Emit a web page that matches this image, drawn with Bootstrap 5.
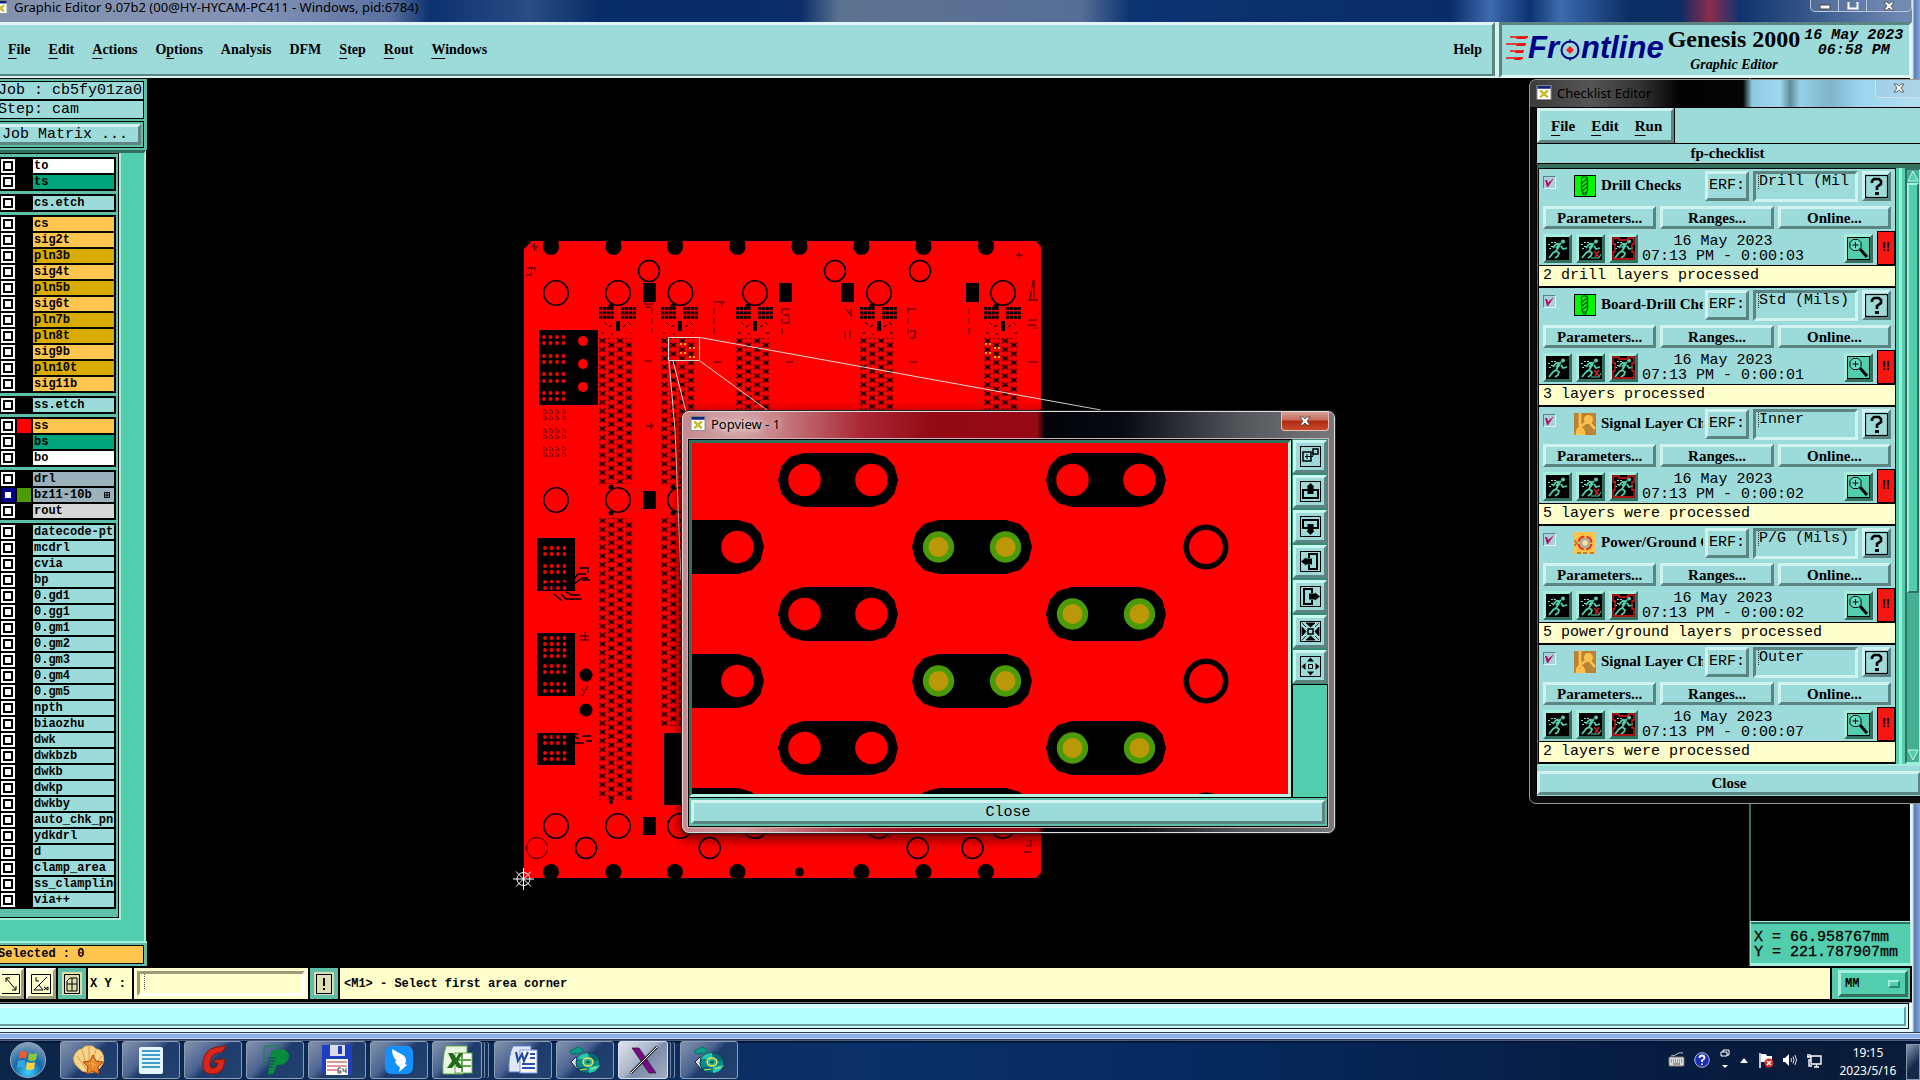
<!DOCTYPE html>
<html lang="en">
<head>
<meta charset="utf-8">
<meta name="viewport" content="width=device-width, initial-scale=1">
<title>Graphic Editor</title>
<link href="https://cdn.jsdelivr.net/npm/bootstrap@5.3.0/dist/css/bootstrap.min.css" rel="stylesheet">
<style>
:root{--cy:#9cdbda;--cyl:#d0f3f1;--cyd:#5a8583;--tl:#52ceae;--tll:#a4efdb;--tld:#34705f;--cream:#ffffcb}
body{font-family:"Liberation Serif",serif;font-size:14px;line-height:16px;color:#000;background:#000;overflow:hidden}
button,input,select{font:inherit;color:inherit;border-radius:0}
a{color:inherit;text-decoration:none}
a u{text-underline-offset:4px}
.mono{font-family:"Liberation Mono",monospace;font-size:15px}
.mono-s{font-family:"Liberation Mono",monospace;font-size:12px;font-weight:700}
.ui{font-family:"Noto Sans",sans-serif;font-size:13px}
.raised{background:var(--cy);border:3px solid;border-color:var(--cyl) var(--cyd) var(--cyd) var(--cyl);padding:0}
.raised-t{background:var(--tl);border:3px solid;border-color:var(--tll) var(--tld) var(--tld) var(--tll);padding:0}
.titlebar{height:22px;background:linear-gradient(90deg,#8391ae 0,#8494b6 250px,#5a719f 390px,#0d3270 430px,#2b4c85 530px,#082c66 600px,#0a2d68 800px,#5d7390 840px,#566f96 1080px,#0c3472 1130px,#0a2c66 1450px,#3d6bb0 1490px,#0c336f 1530px,#3c6bae 1560px,#0c2d63 1630px,#0c2d63 1680px,#8a2c4c 1710px,#0f336e 1740px,#6d87b0 1900px)}
.titlebar .ttl{color:#000;line-height:14px;padding-left:6px}
.winframe{padding-right:8px;background:linear-gradient(90deg,#fff 0,#5c7fb4 30%,#7fa6de) right/8px 100% no-repeat,#000}
.winbtns{height:12px;width:102px;border:1px solid #b8c8de;border-top:0;border-radius:0 0 5px 5px;background:#8093b355}
.winbtns button{background:none;border:0;border-left:1px solid #b8c8de;padding:0;line-height:0;width:28px}
.winbtns .wide{width:46px}
.apphead{height:56px;background:#d8f4f1}
.menubar{background:var(--cy);border:solid;border-width:3px 3px 2px 0;border-color:#e0f6f6 var(--cyd) var(--cyd);font-weight:700;gap:18px;padding:0 10px 0 8px;margin-bottom:2px}
.brand{width:413px;background:var(--cy);border:3px solid;border-color:var(--cyd) #dff8f5 #dff8f5 var(--cyd)}
.logo-t{font:italic 700 31px/34px "Liberation Sans",sans-serif;color:#000087}
.product{font-size:24px;line-height:28px;font-weight:700}
.stamp{line-height:15px;padding-top:3px}
.side{width:147px;background:#000}
.sidehead{background:#62bda8;padding:2px 3px 2px 0;border-top:1px solid #000}
.sidehead .cell{text-indent:-2px}
.cell{border:1px solid #000;border-left:0;background:var(--cy);height:19px;line-height:17px;overflow:hidden;white-space:pre}
.matrix{border:1px solid #000;border-left:0;height:27px;padding:2px 2px 2px 0;margin-top:2px;background:#62bda8}
.matrix button{height:21px;line-height:14px;border-left:0;width:100%;text-align:left;padding-left:2px}
.track{background:var(--tl);border-right:2px solid var(--tll);border-top:3px solid var(--tld);width:146px}
.frame{width:121px;border:solid;border-width:0 2px 2px 0;border-color:var(--tll);background:#000;padding:0 1px 1px 0}
.frame>div{background:#5fc0aa;padding:3px 2px 8px 0;border-top:1px solid #000}
.grp{background:#000;width:116px;padding:2px 0;margin-bottom:3px;display:flex;flex-direction:column;gap:2px}
.lay{display:flex;height:14px;padding-left:1px;gap:2px;line-height:14px}
.lay input{appearance:none;width:14px;height:14px;margin:0;background:#fff;box-shadow:inset 0 0 0 2px #fff,inset 0 0 0 4px #000;flex:none}
.lay input.act{box-shadow:inset 0 0 0 4px #00008c}
.sw{width:14px;flex:none}.sw-r{background:red}.sw-g{background:#4b9b05}
.lay label{width:81px;overflow:hidden;white-space:nowrap;padding-left:1px;background:var(--cy)}
.lay .c-w{background:#fff}.lay .c-g{background:#00a57c}.lay .c-o{background:#ffc54f}.lay .c-y{background:#d9ab00}.lay .c-b{background:#9bb2bc}.lay .c-s{background:#d6d6d6}
.selbox{background:#62bda8;border-top:2px solid var(--tll);padding:2px 3px 2px 0}
.selbox div{background:#ffc54f;text-indent:-2px}
.rightp{width:163px;border-left:2px solid var(--tld);border-right:2px solid #dff8f5}
.coords{background:var(--tl);border-top:2px solid var(--tld);border-bottom:3px solid var(--tll);height:44px;padding:6px 0 0 3px;line-height:15px;white-space:pre;outline:1px solid var(--tll);-webkit-text-stroke:.3px #000}
.cmd{height:36px;background:#000;padding:2px 2px 3px 0;gap:2px}
.cmd>*{background:var(--cream)}
.cmd .lead-in{width:44px;padding-left:2px;white-space:pre}
.tool{width:30px;padding:0;border:3px solid;border-color:#fffff0 #9c9c7c #9c9c7c #fffff0;line-height:0}
.tool.first{width:24px;border-left:0}
.tool.on{border:4px solid #5fbfa6;width:28px;background:#deddb2}
.cmd input{border:3px solid;border-color:#9c9c7c #fff #fff #9c9c7c;background:repeating-linear-gradient(#555 0 1px,transparent 1px 2px) 4px 0/1px 16px no-repeat,var(--cream);width:100%;height:100%;outline:1px solid var(--cream);padding:0 3px 8px}
.cmd .entry{width:174px;padding:3px}
.cmd .unit{width:78px;background:var(--tl);padding:2px}
.unit select{appearance:none;width:70px;height:27px;padding-left:4px;margin-left:4px;outline:0}
.unit svg{right:10px;top:12px}
.cybar{height:30px;background:#e3ffff;border-top:1px solid #6b8585;padding:0 3px 2px 0}
.cybar>div{height:26px;border:1px solid #000;border-left:0;padding:2px 2px 2px 0;background:#c6ffff}
.cybar>div>div{height:100%;background:#b4ffff;border:2px solid;border-color:#e2ffff #6c9b9b #6c9b9b;border-left:0}
.botedge{height:8px;background:linear-gradient(#2b3f5c 0 1px,#dbe8fa 1px 2px,#8fb0ea 2px 6px,#c8daf5 6px 7px,#2a3c58 7px);margin-right:-8px}
.taskbar{height:40px;background:linear-gradient(#4a5f80 0 1px,#031738 1px 3px,transparent 3px),linear-gradient(90deg,#0c2648,#0c2a55 20%,#0b2f68 45%,#062a60 62%,#061c40 86%,#0a1c38);color:#fff}
.orb{width:60px;background:none;border:0;padding:0 5px 0 0;line-height:0;text-align:center}
.tb{width:58px;height:38px;border:1px solid #8b9cb5;border-radius:3px;background:linear-gradient(135deg,#8594ae 0,#4a6390 40%,#1d3c6c 52%,#24426f);padding:0;line-height:0}
.tb.st{width:50px;margin-right:8px;box-shadow:3px 0 0 -1px #14305a,4px 0 0 -1px #7589a8,7px 0 0 -1px #14305a,8px 0 0 -1px #7589a8}
.tb.cur{background:linear-gradient(135deg,#dfe4ec 0,#a9b5c9 45%,#7c8cab 55%,#a2adc2);border-color:#dce3ee}
.tray{gap:8px}
.clock{font-size:12px;line-height:18px;width:76px;padding-top:4px}
.peek{width:14px;border:1px solid #8897b0;background:linear-gradient(135deg,#8a9bb5,#16294a 60%);padding:0}
.popw{left:535px;top:333px;width:653px;height:422px;border-radius:7px;border:1px solid #ddd;box-shadow:0 0 0 1px #222,0 4px 12px 2px #0009;padding:0 5px 4px 4px;background:linear-gradient(90deg,#c58a90 0,#d3a3a6 60px,#a92733 180px,#930914 250px,#960a14 354px,#02040a 362px,#080a10 440px,#55575c 560px,#77797c)}
.popw::before{content:"";position:absolute;inset:124px 0 0 0;z-index:-1;border-radius:0 0 7px 7px;background:linear-gradient(90deg,#8c0f1a 358px,#050609 360px)}
.popw .cap{height:26px;padding:4px 0 0 3px;gap:5px}
.glow{text-shadow:0 0 6px #fffa,0 0 8px #fff8,0 0 10px #fff8}
.xred{width:48px;height:19px;border:1px solid #e8c0b8;border-top:0;border-radius:0 0 4px 4px;background:linear-gradient(#d9a096,#c66a59 45%,#b02a12 50%,#c8492a);padding:0;line-height:0;margin-top:-4px}
.popin{background:#000;border:1px solid #c9b5b5;padding:1px;min-height:0}
.popcv{border:3px solid;border-color:var(--tld) #b4f2e2 #b4f2e2 var(--tld);min-width:0;background:red}
.popcol{width:36px;background:var(--tl);border-left:2px solid #000}
.popcol button{height:33px;margin-bottom:2px;outline:1px solid #3b8a76;border-color:#c6f7f0 var(--cyd) var(--cyd) #c6f7f0;display:block;width:100%;line-height:0;box-shadow:0 2px 0 #000}
.popclose{background:#5fc0aa;padding:2px;border-top:1px solid #000}
.popclose button{height:24px;line-height:17px}
.chk{left:1529px;top:79px;width:399px;height:725px;border:1px solid #999;border-radius:7px;padding:0 0 6px 6px;background:linear-gradient(90deg,#3a3a3a 0,#555 60px,#333 110px,#020202 150px,#050505 213px,#8fc9e0 222px,#9fd8ee 250px,#5f8b9c 260px,#96d0e8 270px,#7fb4ca 300px,#9cd5ee 330px,#b8e0f0) 0 0/100% 27px no-repeat,#0b0b0b}
.chk .cap{height:27px;gap:5px;padding:5px 0 0 0}
.xgl{width:48px;height:19px;border:1px solid #cfe0ee;border-top:0;border-radius:0 0 4px 4px;background:#9fc6dd66;padding:0;line-height:0;margin-top:-6px}
.chkin{width:385px;background:var(--cy);border:1px solid #000;border-right:0}
.cmenu{width:137px;height:35px;font-size:15px;font-weight:700;gap:16px;padding-left:11px;outline:1px solid #000}
.ctitle{height:21px;font-size:15px;font-weight:700;line-height:19px;border:solid #000;border-width:1px 0;padding-right:3px}
.cscroll{height:602px;background:var(--tl);border-top:4px solid var(--tld);border-left:1px solid var(--tld);border-bottom:2px solid var(--tll);overflow:hidden}
.citems{width:359px;overflow:hidden;background:#000;padding:1px 1px 0}
.item{background:var(--cy);height:117px;margin-bottom:2px;padding:2px 0 0 4px;font-size:15px}
.item .row1{height:36px}
.item .name{font-weight:700;height:28px;line-height:28px;min-width:0}
.item .name svg{margin:4px 5px 0 18px}
.item .name label{overflow:hidden;white-space:nowrap;min-width:0}
.tick{appearance:none;width:13px;height:13px;border:1px solid #5a8583;border-color:#5a8583 #e0f6f6 #e0f6f6 #5a8583;margin:5px 0 0;background:#a9d0dc url("data:image/svg+xml,%3Csvg xmlns='http://www.w3.org/2000/svg' viewBox='0 0 11 11'%3E%3Cpath d='M1 3h2l1 3L10 1 4 10H3z' fill='%23b0135c'/%3E%3C/svg%3E");flex:none}
.erf{width:44px;height:30px;margin:0 4px 0 2px}
.qbtn{width:29px;height:30px;line-height:0}
.ent{border:3px solid;border-color:var(--cyd) var(--cyl) var(--cyl) var(--cyd);background:repeating-linear-gradient(#333 0 1px,transparent 1px 2px) 2px 0/1px 15px no-repeat,var(--cy);width:105px;height:31px;padding:0 0 10px 3px;border-radius:0;outline:0}
.b3{height:23px;font-weight:700;line-height:14px;flex:1}
.runrow{margin-top:5px}
.run{width:29px;height:29px;line-height:0}
.bang{width:18px;background:#f81613;border:1px solid #000;font:700 12px/30px "Liberation Sans",sans-serif;text-align:center;margin-top:-3px;height:34px}
.msg{background:var(--cream);border-top:1px solid #000;line-height:20px;height:21px;margin-left:-4px;padding-left:4px}
.when{line-height:15px}
.sb{width:16px;margin-left:3px;background:#47ad94;border:2px solid;border-color:var(--tld) var(--tll) var(--tll) var(--tld)}
.thumb{height:410px;background:var(--tl);border:2px solid;border-color:var(--tll) var(--tld) var(--tld) var(--tll)}
.sbarrow{line-height:0;height:13px}
.rail{width:3px;background:#9af0d8;margin-left:3px}
.cfoot{padding-top:5px}
.cfoot button{height:24px;font-size:15px;line-height:16px}
svg{display:inline-block;flex:none}
</style>
<script src="https://cdn.jsdelivr.net/npm/bootstrap@5.3.0/dist/js/bootstrap.bundle.min.js"></script>
</head>
<body class="vh-100 d-flex flex-column position-relative">

<svg width="0" height="0" class="position-absolute" aria-hidden="true">
<defs>
<symbol id="xico" viewBox="0 0 16 16"><rect x=".5" y=".5" width="15" height="15" fill="#fff" stroke="#888"/><rect x="1" y="1" width="14" height="3" fill="#14247a"/><path d="M4 6l8 7M12 6l-8 7" stroke="#a8a000" stroke-width="2.2"/><path d="M4 6l8 7M12 6l-8 7" stroke="#f0e83a" stroke-width=".8"/></symbol>
<symbol id="xmark" viewBox="0 0 12 10"><path d="M1 1h3l2 2 2-2h3L8 5l3 4H8L6 7 4 9H1l3-4z" fill="#fff" stroke="#444" stroke-width=".8"/></symbol>
<g id="man"><rect width="23" height="23" fill="#000"/><g fill="none" stroke="#52ceae" stroke-width="1.800"><path d="M15 6l-5 5M10 7l3 0M14 8l-4 6-3 2-4 5M10 14l3 2-1 3-3 2M10 7l-3 4M15 9l2 3 4-1"/></g><path d="M2 7h2v1H2zM5 9h2v1H5zM5 5h2v1H5zM8 5h2v1H8zM3 11h2v1H3z" fill="#7fe5cb"/><circle cx="17" cy="4.500" r="2" fill="#52ceae"/></g>
<symbol id="run1" viewBox="0 0 23 23"><use href="#man"/></symbol>
<symbol id="run2" viewBox="0 0 23 23"><use href="#man"/><path d="M15 14l5 6M20 14l-4 6" stroke="#c8231c" stroke-width="1.500"/><path d="M12 21h8l2-4" fill="none" stroke="#52ceae"/></symbol>
<symbol id="run3" viewBox="0 0 23 23"><use href="#man"/><path d="M1 1h6v2h9V1h6v6h-2v8h2v7H1v-7h2V7H1z" fill="none" stroke="#e01818" stroke-width="1.300"/></symbol>
<symbol id="mag" viewBox="0 0 23 23"><rect x=".5" y=".5" width="22" height="22" fill="#52ceae" stroke="#000"/><path d="M6 2.500h5l3 3v5l-3 3H6l-3-3v-5z" fill="#62dcc0" stroke="#000"/><path d="M8.500 5v6M5.500 8h6" stroke="#000"/><path d="M13 12l7 8" stroke="#000" stroke-width="3"/></symbol>
<symbol id="qm" viewBox="0 0 23 23"><rect x=".5" y=".5" width="22" height="22" fill="none" stroke="#000" stroke-width="1.200"/><path d="M7 8V6l2-2h5l2 2v3l-4 3v3" fill="none" stroke="#000" stroke-width="2.600"/><rect x="10" y="17" width="4" height="3"/></symbol>
<symbol id="drill" viewBox="0 0 22 22"><rect x=".5" y=".5" width="21" height="21" fill="#00f800" stroke="#000"/><path d="M7.500 3l1-1h4l1 1v12l-2 5h-2l-2-5zM8 8l5-4M8 12l5-4M8 16l5-4M9 18h3" fill="none" stroke="#054a16" stroke-width="1.200"/></symbol>
<symbol id="signal" viewBox="0 0 22 22"><rect width="22" height="22" fill="#bb8335"/><path d="M6 0v15M3 21q0-5 3-6 4 1 4 6zM6 14l7-5M15 9l6 7" fill="none" stroke="#ffc24c" stroke-width="2.600"/><path d="M4 22q0-5 3-5t3 5z" fill="#ffc24c"/><circle cx="14.500" cy="6.500" r="4.500" fill="#ffc24c"/></symbol>
<symbol id="power" viewBox="0 0 22 22"><rect width="22" height="22" fill="#ffc24c"/><circle cx="11" cy="11" r="6.500" fill="none" stroke="#e0321c" stroke-width="2" stroke-dasharray="7.800 2.400" stroke-dashoffset="-1"/><circle cx="11" cy="11" r="4" fill="#ffe0a0" stroke="#a9a8a0" stroke-width="2.500"/><path d="M0 8l3 3-3 3M3 21h4M9 21h4M16 21h4" stroke="#b98235" fill="none" stroke-width="2"/></symbol>
<symbol id="cd" viewBox="0 0 32 30"><path d="M2 17l5-5 5 10-4 2z" fill="#d8dde5" stroke="#223"/><ellipse cx="19" cy="18" rx="12" ry="10" fill="#0a8a86" stroke="#073a52"/><path d="M8 14q3-6 11-6l0 6zM31 20q-3 7-11 8l0-6z" fill="#25c8b0"/><path d="M20 8q8 1 10 7l-7 2zM8 22q3 5 10 6l0-6z" fill="#066a74"/><ellipse cx="19" cy="17" rx="5" ry="4" fill="#2fb39c" stroke="#e8e05a" stroke-width="1.500"/><ellipse cx="19" cy="17" rx="2" ry="1.500" fill="#063"/><path d="M1 6l8-4 6 3-3 3-9 1z" fill="#0d9a92" stroke="#075"/><path d="M11 25l7-1M22 24l6-2" stroke="#d8e860" fill="none"/></symbol>
<pattern id="pads" width="17.600" height="8.800" patternUnits="userSpaceOnUse"><path d="M0 .800h2M5 .800h2M0 4.600h2.500M4.500 4.600h2.500M8.800 5.200h2.500M13.300 5.200h2.500M8.800 .300h2M13.500 .300h2M8.800 8.700h2M13.500 8.700h2" stroke="#200" stroke-width="1"/><path d="M1.500 2.700h4M10.300 7h4" stroke="#000" stroke-width="3"/></pattern>
</defs></svg>

<div class="winframe flex-grow-1 d-flex flex-column" style="min-height:0">
  <div class="titlebar ui d-flex justify-content-between">
    <div class="d-flex align-items-start"><svg width="8" height="14" viewBox="8 0 8 16"><use href="#xico" width="16" height="16"/></svg><span class="ttl">Graphic Editor 9.07b2 (00@HY-HYCAM-PC411 - Windows, pid:6784)</span></div>
    <div class="winbtns d-flex">
      <button class="border-0" aria-label="Minimize"><svg width="12" height="8"><rect x="1" y="3" width="10" height="4" fill="#fff" stroke="#444"/></svg></button>
      <button aria-label="Restore"><svg width="12" height="8"><rect x="1.500" y="-1" width="9" height="7.500" fill="none" stroke="#fff" stroke-width="2"/></svg></button>
      <button class="wide" aria-label="Close window"><svg width="12" height="10"><use href="#xmark"/></svg></button>
    </div>
  </div>

  <header class="apphead d-flex">
    <nav class="menubar flex-grow-1 d-flex align-items-center">
      <a href="#"><u>F</u>ile</a><a href="#"><u>E</u>dit</a><a href="#"><u>A</u>ctions</a><a href="#">O<u>p</u>tions</a><a href="#">Analysis</a><a href="#">DFM</a><a href="#"><u>S</u>tep</a><a href="#"><u>R</u>out</a><a href="#"><u>W</u>indows</a>
      <a href="#" class="ms-auto">Help</a>
    </nav>
    <div class="brand ms-1 d-flex">
      <div class="d-flex align-items-center ps-1 pb-1">
        <svg width="22" height="26" viewBox="0 0 22 26"><path d="M4 2h18M0 9h20M4 16h14M0 23h17" stroke="#e11" stroke-width="1.300"/><path d="M22 1l-11 1-1 2h10zM20 8l-9 1-1 2h9zM18 15l-8 1-1 2h8zM17 22l-8 1-1 2h7z" fill="#e11"/></svg>
        <span class="logo-t">Fr</span><svg width="22" height="22" viewBox="0 0 22 22" class="mt-1"><circle cx="11" cy="11" r="8.500" fill="none" stroke="#000087" stroke-width="2"/><path d="M11 0v4M11 18v4" stroke="#000087"/><path d="M11 7l4 4-4 4-4-4z" fill="#f22"/></svg><span class="logo-t">ntline</span>
      </div>
      <div class="text-center ms-1"><div class="product">Genesis 2000</div><div class="fw-bold fst-italic pt-1">Graphic Editor</div></div>
      <div class="stamp mono fw-bold fst-italic text-center ms-1">16 May 2023<br>06:58 PM</div>
    </div>
  </header>

  <main class="flex-grow-1 d-flex" style="min-height:0">
    <aside class="side d-flex flex-column">
      <div class="sidehead">
        <div class="cell mono">Job : cb5fy01za0</div>
        <div class="cell mono">Step: cam</div>
        <div class="matrix"><button class="raised mono">Job Matrix ...</button></div>
      </div>
      <div class="track flex-grow-1"><div class="frame mono-s"><div id="layers"></div></div></div>
      <div class="selbox mono-s"><div class="cell">Selected : 0</div></div>
    </aside>
    <section class="flex-grow-1 position-relative overflow-hidden">
      <svg id="board" width="100%" height="100%" class="d-block"></svg>
      <div class="popw position-absolute d-flex flex-column" role="dialog" aria-label="Popview">
        <div class="cap d-flex ui"><svg width="16" height="15"><use href="#xico"/></svg><span class="glow">Popview - 1</span><button class="xred ms-auto" aria-label="Close popview"><svg width="12" height="10"><use href="#xmark"/></svg></button></div>
        <div class="popin flex-grow-1 d-flex flex-column">
          <div class="d-flex flex-grow-1" style="min-height:0">
            <div class="popcv flex-grow-1"><svg id="zoomcv" width="100%" height="100%" class="d-block"></svg></div>
            <div class="popcol" id="popcol"></div>
          </div>
          <div class="popclose"><button class="raised mono w-100 d-block">Close</button></div>
        </div>
      </div>
    </section>
    <aside class="rightp d-flex flex-column"><div class="coords mono mt-auto">X = 66.958767mm
Y = 221.787907mm</div></aside>
  </main>

  <div class="cmd d-flex mono-s">
    <button class="tool first" aria-label="Diagonal"><svg width="18" height="20" viewBox="0 0 18 20"><path d="M0 .500h17.500v19H0M4 4l10 12M4 8V4h4M14 12v4h-4" fill="none" stroke="#000"/></svg></button>
    <button class="tool" aria-label="Angle"><svg width="20" height="20" viewBox="0 0 20 20"><path d="M.5.500h19v19H.500zM3 16L16 3M3 16h9M5 3v4h3M8 11l4 5M13 13l4 3v-3l-4 3" fill="none" stroke="#000"/></svg></button>
    <button class="tool on" aria-label="Grid"><svg width="16" height="20" viewBox="0 0 16 20"><path d="M.5.500h15v19H.500zM3 17V7l3-3h7v13zM8 4v13M3 10h10" fill="none" stroke="#000"/></svg></button>
    <label for="xy" class="lead-in d-flex align-items-center">X Y :</label>
    <div class="entry"><input id="xy" type="text"></div>
    <button class="tool on" aria-label="Apply"><svg width="16" height="20" viewBox="0 0 16 20"><rect x=".5" y=".5" width="15" height="19" fill="none" stroke="#000"/><path d="M8 4v8M8 14v2" stroke="#000" stroke-width="2"/></svg></button>
    <div class="flex-grow-1 d-flex align-items-center ps-1">&lt;M1&gt; - Select first area corner</div>
    <div class="unit position-relative"><select class="raised-t fw-bold" aria-label="Units"><option>MM</option></select><svg class="position-absolute" width="12" height="8" aria-hidden="true"><path d="M0 0h12v8H0z" fill="#2c8a70"/><path d="M0 0h12l-2 2H2v4l-2 2z" fill="#a4efdb"/><rect x="2" y="2" width="8" height="4" fill="#52ceae"/></svg></div>
  </div>
  <div class="cybar"><div><div></div></div></div>
  <div class="botedge"></div>
</div>

<div class="chk position-absolute d-flex flex-column overflow-hidden" role="dialog" aria-label="Checklist Editor">
  <div class="cap d-flex ui"><svg width="16" height="15"><use href="#xico"/></svg><span>Checklist Editor</span><button class="xgl ms-auto me-1" aria-label="Close checklist"><svg width="12" height="10"><use href="#xmark"/></svg></button></div>
  <div class="chkin flex-grow-1 d-flex flex-column">
    <nav class="cmenu raised d-flex align-items-center"><a href="#"><u>F</u>ile</a><a href="#"><u>E</u>dit</a><a href="#"><u>R</u>un</a></nav>
    <div class="ctitle text-center">fp-checklist</div>
    <div class="cscroll d-flex"><div class="citems" id="items"></div>
      <div class="rail"></div>
      <div class="sb d-flex flex-column"><div class="sbarrow"><svg width="12" height="12"><path d="M1 11L6 1l5 10z" fill="#52ceae" stroke="#c0f5e8"/></svg></div><div class="thumb"></div><div class="sbarrow mt-auto"><svg width="12" height="12"><path d="M1 1l5 10L11 1z" fill="#52ceae" stroke="#c0f5e8"/></svg></div></div>
    </div>
    <div class="cfoot"><button class="raised w-100 fw-bold">Close</button></div>
  </div>
</div>

<footer class="taskbar d-flex align-items-center">
  <button class="orb" aria-label="Start"><svg width="38" height="38" viewBox="0 0 38 38"><defs><radialGradient id="og" cx=".5" cy=".85" r=".8"><stop offset="0" stop-color="#3fd0ff"/><stop offset=".5" stop-color="#1668a8"/><stop offset="1" stop-color="#7f9db8"/></radialGradient></defs><circle cx="19" cy="19" r="17.500" fill="url(#og)" stroke="#9ab" /><path d="M11 11q4-2 7 0l-1 7q-4-2-7 0z" fill="#f0592a"/><path d="M20 12q4 2 8 0l-1 7q-4 2-8 0z" fill="#8cc63f"/><path d="M9 20q4-2 7 0l-1 7q-3-2-7 0z" fill="#3aa5e8"/><path d="M18 21q4 2 8 0l-1 7q-4 2-8 0z" fill="#ffd23a"/></svg></button>
  <div class="d-flex gap-1" id="tasks"></div>
  <div class="tray d-flex align-items-center ms-auto">
    <svg width="18" height="18" viewBox="0 0 18 18"><path d="M3 5q4 0 6-2t6-1" fill="none" stroke="#ccc"/><rect x="1" y="6" width="15" height="9" rx="1" fill="#ddd" stroke="#777"/><path d="M3 9h11M3 11h11" stroke="#555" stroke-dasharray="1 1"/><path d="M5 13h7" stroke="#555"/></svg>
    <svg width="16" height="16" viewBox="0 0 16 16"><circle cx="8" cy="8" r="7.300" fill="#1a2fb5" stroke="#aab8e8"/><path d="M5.500 6q0-2.500 2.500-2.500T10.500 6Q10.500 7 8 8.500V10M8 11.500V13" fill="none" stroke="#fff" stroke-width="1.800"/></svg>
    <svg width="14" height="24" viewBox="0 0 14 24"><path d="M5 4V2h6v5H9M3 4h6v4H3z" fill="none" stroke="#fff"/><path d="M4 17h6l-3 3z" fill="#fff"/></svg>
    <svg width="8" height="6"><path d="M0 6l4-5 4 5z" fill="#fff"/></svg>
    <svg width="18" height="18" viewBox="0 0 18 18"><path d="M4 2v15" stroke="#fff" stroke-width="1.500"/><path d="M5 3h5l1 2h5v6H5z" fill="#fff"/><circle cx="13" cy="12" r="4.500" fill="#d92b20"/><path d="M11 10l4 4M15 10l-4 4" stroke="#fff" stroke-width="1.500"/></svg>
    <svg width="16" height="16" viewBox="0 0 16 16"><path d="M1 6h2l4-4v12l-4-4H1z" fill="#fff"/><path d="M9 6q1 2 0 4M11 4.500q2 3.500 0 7M13 3q3 5 0 10" fill="none" stroke="#ddd"/></svg>
    <svg width="16" height="16" viewBox="0 0 16 16"><path d="M5 4h10v8H5zM8 15h5M10.500 12v3M2 2v3M4 2v3M1 5h4v3H3v6h3" fill="none" stroke="#fff" stroke-width="1.400"/></svg>
    <div class="clock ui text-center align-self-start">19:15<br>2023/5/16</div>
  </div>
  <button class="peek align-self-stretch mt-1" aria-label="Show desktop"></button>
</footer>

<script>
/* Layer list: groups of [name, label colour class] */
const groups=[
 [['to','c-w'],['ts','c-g']],
 [['cs.etch','']],
 [['cs','c-o'],['sig2t','c-o'],['pln3b','c-y'],['sig4t','c-o'],['pln5b','c-y'],['sig6t','c-o'],['pln7b','c-y'],['pln8t','c-y'],['sig9b','c-o'],['pln10t','c-y'],['sig11b','c-o']],
 [['ss.etch','']],
 [['ss','c-o','sw-r'],['bs','c-g'],['bo','c-w']],
 [['drl','c-b'],['bz11-10b','c-b','sw-g'],['rout','c-s']],
 ['datecode-pte','mcdrl','cvia','bp','0.gd1','0.gg1','0.gm1','0.gm2','0.gm3','0.gm4','0.gm5','npth','biaozhu','dwk','dwkbzb','dwkb','dwkp','dwkby','auto_chk_pnl','ydkdrl','d','clamp_area','ss_clampline','via++'].map(n=>[n,''])
];
let n=0;
document.getElementById('layers').innerHTML=groups.map((g,i)=>`<div class="grp${i==groups.length-1?' mb-0':''}">`+g.map(([t,c,s])=>{n++;
 const mark=t=='bz11-10b'?'<svg class="float-end mt-1 me-1" width="6" height="6"><path d="M.5.500h5v5h-5zM3 0v6M0 3h6" fill="none" stroke="#000"/></svg>':'';
 return `<div class="lay"><input type="checkbox" id="l${n}"${s=='sw-g'?' class="act"':''}><span class="sw ${s||''}"></span><label class="${c}" for="l${n}">${t}${mark}</label></div>`}).join('')+'</div>').join('');

/* Checklist actions */
const acts=[['drill','Drill Checks','Drill (Mil','0:00:03','2 drill layers processed'],
 ['drill','Board-Drill Che','Std (Mils)','0:00:01','3 layers processed'],
 ['signal','Signal Layer Ch','Inner','0:00:02','5 layers were processed'],
 ['power','Power/Ground C','P/G (Mils)','0:00:02','5 power/ground layers processed'],
 ['signal','Signal Layer Ch','Outer','0:00:07','2 layers were processed']];
document.getElementById('items').innerHTML=acts.map((a,i)=>`<div class="item d-flex flex-column">
<div class="row1 d-flex"><div class="name d-flex flex-grow-1"><input class="tick" type="checkbox" checked id="c${i}"><svg width="22" height="22"><use href="#${a[0]}"/></svg><label for="c${i}">${a[1]}</label></div>
<div class="d-flex"><button class="raised mono erf">ERF:</button><input class="ent mono" type="text" aria-label="ERF model" value="${a[2]}"><button class="raised qbtn ms-1 me-1" aria-label="Help"><svg width="23" height="23"><use href="#qm"/></svg></button></div></div>
<div class="d-flex gap-1 pe-1"><button class="raised b3">Parameters...</button><button class="raised b3">Ranges...</button><button class="raised b3">Online...</button></div>
<div class="runrow d-flex"><div class="d-flex gap-1"><button class="raised-t run" aria-label="Run"><svg width="23" height="23"><use href="#run1"/></svg></button><button class="raised-t run" aria-label="Run on selection"><svg width="23" height="23"><use href="#run2"/></svg></button><button class="raised-t run" aria-label="Run in area"><svg width="23" height="23"><use href="#run3"/></svg></button></div>
<div class="when mono text-center ms-1">16 May 2023<br>07:13 PM - ${a[3]}</div>
<button class="raised-t run ms-auto me-1" aria-label="Results"><svg width="23" height="23"><use href="#mag"/></svg></button><div class="bang">!!</div></div>
<div class="msg mono mt-auto">${a[4]}</div></div>`).join('');

/* Board drawing */
const S=[];const c=(x,y,r,f='#000')=>S.push(`<circle cx="${x}" cy="${y}" r="${r}" fill="${f}"/>`);
const o=(x,y,r,w=1.6)=>S.push(`<circle cx="${x}" cy="${y}" r="${r}" fill="none" stroke="#000" stroke-width="${w}"/>`);
const b=(x,y,w,h,f='#000')=>S.push(`<rect x="${x}" y="${y}" width="${w}" height="${h}" fill="${f}"/>`);
const p=(d,s='#000',w=1)=>S.push(`<path d="${d}" fill="none" stroke="${s}" stroke-width="${w}"/>`);
S.push('<path d="M532 241H1036L1041 247V873L1036 878H524V249z" fill="red"/>');
[551,613.5,675,737.5,799.5,861.5,923.5,986].forEach((x,i)=>{b(x-7.5,240,15,8);c(x,247,8);c(x,872,i==4?4.5:8)});
[649,835,920].forEach(x=>o(x,271,10.5));
[556,618,680.5,755,879,1003].forEach(x=>o(x,293,12.2));
[556,618,680].forEach(x=>{o(x,500,12.2);o(x,826,12.2)});[755,879,1003].forEach(x=>o(x,826,12.2));
[643,779,841,966].forEach(x=>b(x,283,13,19));b(643,491,13,18);b(643,817,13,18);
o(537,848,10.5,.8);[586,709.7,917.7,972.5].forEach(x=>o(x,848,10.5));
b(539,330,59,75);[337,343,356,362,374,381,393,399].forEach(y=>[544,550.5,557,563.5].forEach(x=>c(x,y,1.9,'red')));[341,364,387].forEach(y=>c(583,y,5,'red'));
const blk=(y,h,ys)=>{b(537,y,38,h);ys.forEach(q=>[545,551.5,558,564.5].forEach(x=>c(x,q,1.9,'red')))};
blk(538,53,[548,554,566,572,582,588]);blk(633,63,[638,644,650,656,666,672,684,691]);blk(733,32,[737,743,753,759]);
c(586,675,6.5);c(586,710,6.5);b(664,733,40,72);
[599,661,736,860,984].forEach((x,i)=>{
 S.push(`<g transform="translate(${x} 338)"><rect width="35" height="${i<2?146:80}" fill="url(#pads)"/></g>`);
 if(i<2)S.push(`<g transform="translate(${x} 518)"><rect width="35" height="${i?208:282}" fill="url(#pads)"/></g>`);
 for(let k=0;k<3;k++)for(let j=0;j<8;j++)b(x+(j<4?j*3.8:j*3.8+7),307+k*4.4,3.3,3,'#100');
 c(x+12,306,2.6);b(x+17,321,4,10);p(`M${x+5} 322l3 3M${x+10} 327l3-2M${x+24} 327l3-2M${x+29} 322l3 3M${x+2} 333h3M${x+30} 333h3M${x+12} 334h2`);
});
[611,673].forEach(x=>{c(x,487,2.5);c(x,513,2.5)});c(611,802,2);
/* Silkscreen marks */
[412,418,431,437,449,455].forEach(y=>[543,549,555,562].forEach(x=>p(`M${x} ${y-2}h2l2 2l-1 2M${x} ${y+1}h2`,'#600')));
const dash=(x,y1,y2)=>S.push(`<path d="M${x} ${y1}V${y2}" stroke="#400" stroke-dasharray="6 4"/>`);
dash(652,308,333);dash(714,308,338);dash(782,308,338);dash(908,308,338);dash(969,308,338);
p('M644 304h9M646 307h5M713 302h12M722 302v5M783 309h7M783 315h6v8h-6M846 309l6 8M851 309v7M845 331v8M850 331v8M908 309h8M910 331h5v7h-5M1030 299l3-18M1028 300h10M1034 280v20M1029 320h8M1028 325h8M1033 328h5M527 268h8M526 275h5l1-8M535 267v4M645 361h7M714 362h8M786 362h7M909 362h8M1029 362h9M646 426h8M651 422v8M580 636h9M580 640h9M585 632v8M581 688l3 4M588 686l-3 5M582 696l3-4M1026 846h5v-6M1024 852h8','#300');
p('M545 584h12l15-2 6-8h8M552 588l8-4h14l8-6h6M580 568h8v5M582 580h8M561 594l5 5h16M566 592l6 3h8M554 594l8 7','#000',1.4);
p('M552 737l4-3h22M566 735l8 8h10M570 734l9 5M582 736h9M586 741h6','#000',1.4);
p('M531 247h7M534.5 243v8M532 245l5 5M1016 255h7M1019 252v7','#500');
/* Picked pads */
[[680,344],[689,348],[680,353],[689,357],[985,344],[994,348],[985,353],[994,357]].forEach(q=>p(`M${q[0]} ${q[1]}h2m2 0h2`,'#d8b400',2));
p('M668.5 337.5h31v23h-31zM700 337.5L1101 410M700 361l67 49M673 361l13 51M669 361l6 69 6 150','#d8d8d8',1);
/* Origin mark */
p('M513 879h21M523.5 868v22M516 871.5l15 15M531 871.5l-15 15','#fff',1);S.push('<circle cx="523.5" cy="879" r="6.5" fill="none" stroke="#fff"/>');
document.getElementById('board').innerHTML=`<g transform="translate(-147 -78)">${S.join('')}</g>`;

/* Magnified view */
const Z=[];
const pill=(x,y,g)=>{Z.push(`<path d="M${x-34} ${y-26.5}h68l14 4 8 9 3.500 13.500-3.500 13.500-8 9-14 4h-68l-14-4-8-9-3.500-13.500 3.500-13.500 8-9z" stroke="#000" stroke-width="1" stroke-linejoin="round"/>`);
 [-33.5,33.5].forEach(d=>g?Z.push(`<circle cx="${x+d}" cy="${y}" r="15.7" fill="#4b9b09"/><circle cx="${x+d}" cy="${y}" r="10" fill="#bb9808"/>`):Z.push(`<circle cx="${x+d}" cy="${y}" r="16.3" fill="red"/>`))};
[480,614,748].forEach((y,i)=>{pill(838,y);pill(1106,y,i)});
[547,681,815].forEach(y=>{pill(704,y);pill(972,y,1);Z.push(`<circle cx="1206" cy="${y}" r="19.7" fill="none" stroke="#000" stroke-width="5.5"/>`)});
document.getElementById('zoomcv').innerHTML=`<g transform="translate(-692 -443)">${Z.join('')}</g>`;

/* Popview tools */
const F='<rect x=".5" y=".5" width="20" height="20" fill="none" stroke="#000"/>';
document.getElementById('popcol').innerHTML=[
 ['Pop','<path d="M3 6h8v9H3zM13 3h5v5h-5z" fill="none" stroke="#000" stroke-width="1.500"/><path d="M5 10.500h8M7 8v5M13 10V6"  stroke="#000"/>'],
 ['Pan up','<path d="M8 9H3v8h15V9h-5" fill="none" stroke="#000" stroke-width="2"/><path d="M10.500 2l4 4h-1v7h-6V6h-1z"/>'],
 ['Pan down','<path d="M8 12H3V4h15v8h-5" fill="none" stroke="#000" stroke-width="2"/><path d="M10.500 19l4-4h-1V8h-6v7h-1z"/>'],
 ['Pan left','<path d="M9 7V3h8v15H9v-4" fill="none" stroke="#000" stroke-width="2"/><path d="M1 10.500l5-4v1h6v6H6v1z"/>'],
 ['Pan right','<path d="M12 7V3H4v15h8v-4" fill="none" stroke="#000" stroke-width="2"/><path d="M20 10.500l-5-4v1H9v6h6v1z"/>'],
 ['Zoom in','<path d="M8 8h5v5H8z" fill="none" stroke="#000" stroke-width="1.500"/><path d="M6 2h9l-4.500 4zM6 19h9l-4.500-4zM2 6v9l4-4.500zM19 6v9l-4-4.500zM2 2l4 4M19 2l-4 4M2 19l4-4M19 19l-4-4" stroke="#000" stroke-width=".8"/>'],
 ['Zoom out','<path d="M8.500 8.500h4v4h-4z" fill="none" stroke="#000"/><path d="M7 5.500h7l-3.500-4zM7 15.500h7l-3.500 4zM5.500 7v7l-4-3.500zM15.500 7v7l4-3.500z"/>']
].map(a=>`<button class="raised" aria-label="${a[0]}"><svg width="21" height="21">${F}${a[1]}</svg></button>`).join('');

/* Taskbar buttons */
const T=[
 ['Shell','','<path d="M9 27Q-3 18 2 10 5 5 9 5q3-4 7-3 4-1 7 3 5 0 7 6 3 8-6 16l-7 2z" fill="#f8d48a" stroke="#e0ac58"/><path d="M16 29L4 12M16 29L9 6M16 29V3M16 29L23 6M16 29L29 12" stroke="#d99c48"/><path d="M20 11l3 6 7 1-5 5 1 7-6-3-6 3 1-7-5-5 7-1z" fill="#e8842c" stroke="#a8480c"/><path d="M20 15v10M16 19l8 2" stroke="#ffd08a" stroke-dasharray="1 1"/>'],
 ['Notes','','<rect x="4" y="3" width="24" height="27" rx="2" fill="#e6f5fd"/><path d="M7 7h18M7 11h18M7 15h18M7 19h18M7 23h18" stroke="#3d9fc8" stroke-width="2"/>'],
 ['G','','<path d="M29 1q-3 2-9 2-13 2-14 16-1 11 9 11 10 0 12-9l1-6-10 1-1 3h4q-1 5-5 5-4 0-3-5 1-9 8-10 6 0 8-8z" fill="#d8261a" stroke="#8c120c"/>'],
 ['P','','<path d="M5 22V2h18" fill="none" stroke="#0a8a3c"/><path d="M12 7q16-5 18 4 0 10-12 10l-4 9H9z" fill="#0a8a3c"/><path d="M9 14h8M9 17h7M9 20h6M9 23h5" stroke="#1c3c6c"/>'],
 ['Save','','<path d="M1 1h30v30H4l-3-3z" fill="#1f3fc0"/><rect x="9" y="1" width="15" height="11" fill="#d8dde8"/><rect x="17" y="2" width="4" height="8" fill="#1f3fc0"/><rect x="5" y="15" width="22" height="16" fill="#fff"/><path d="M6 18h20M6 22h20M6 26h10" stroke="#b33"/><path d="M20 24h-3v5h3v-2h-3M22 24v3h3M25 24v5" fill="none" stroke="#444"/>'],
 ['Bird','','<rect x="2" y="2" width="28" height="28" rx="6" fill="#1590ff"/><path d="M9 5q5 3 11 6 5 4 2 9l2 1-8 7 1-5q-4-2-5-6 0 0 2 0-5-4-5-12z" fill="#fff"/>'],
 ['Excel','st','<path d="M2 30Q1 14 5 2h21v22l-4 6z" fill="#e8f5e0" stroke="#5da848"/><rect x="14" y="9" width="17" height="20" fill="#fff" stroke="#5da848"/><path d="M21 10v18M15 16h15M15 22h15" stroke="#5da848" stroke-width="2"/><path d="M7 9h5l3 5 3-5h4l-5 8 5 7h-5l-3-4-3 4H6l5-7z" fill="#256b1c"/>'],
 ['Word','','<path d="M2 28Q1 12 6 2h18v22l-4 4z" fill="#dfe9fa" stroke="#5a7cc8"/><rect x="13" y="6" width="17" height="23" fill="#fff" stroke="#7a97d8"/><path d="M23 10h5M23 14h5M15 20h13M15 24h13" stroke="#2a50a8" stroke-width="2"/><path d="M9 8l2 9 4-7 2 7 4-9" fill="none" stroke="#234a9f" stroke-width="2.200"/>'],
 ['Genesis','','<use href="#cd"/>'],
 ['X server','st cur','<path d="M5 4h7l17 25h-7z" fill="#7b0a86" stroke="#222" stroke-width=".7"/><path d="M30 3L4 29" stroke="#222" stroke-width="2.500"/><path d="M30 3L4 29" stroke="#fff"/>'],
 ['Genesis 2','','<use href="#cd"/>']];
document.getElementById('tasks').innerHTML=T.map(a=>`<button class="tb ${a[1]}" aria-label="${a[0]}"><svg width="32" height="32" viewBox="0 0 32 32">${a[2]}</svg></button>`).join('');
</script>
</body>
</html>
